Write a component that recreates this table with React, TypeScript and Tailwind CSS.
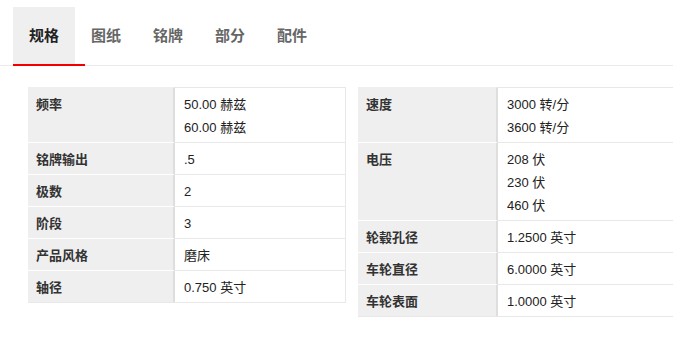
const tabs = ["规格", "图纸", "铭牌", "部分", "配件"]

type Spec = { label: string; values: string[] }

const leftSpecs: Spec[] = [
  { label: "频率", values: ["50.00 赫兹", "60.00 赫兹"] },
  { label: "铭牌输出", values: [".5"] },
  { label: "极数", values: ["2"] },
  { label: "阶段", values: ["3"] },
  { label: "产品风格", values: ["磨床"] },
  { label: "轴径", values: ["0.750 英寸"] },
]

const rightSpecs: Spec[] = [
  { label: "速度", values: ["3000 转/分", "3600 转/分"] },
  { label: "电压", values: ["208 伏", "230 伏", "460 伏"] },
  { label: "轮毂孔径", values: ["1.2500 英寸"] },
  { label: "车轮直径", values: ["6.0000 英寸"] },
  { label: "车轮表面", values: ["1.0000 英寸"] },
]

const SpecTable = ({ specs, labelWidth }: { specs: Spec[]; labelWidth: string }) => {
  return (
    <div className="w-[318px] shrink-0 border-r border-b border-[#e8e8e8]">
      {specs.map((spec, i) => (
        <div key={spec.label} className="flex">
          <div
            className={`${labelWidth} shrink-0 bg-[#efefef] border-r-2 border-[#dedede] px-2 pt-[5px] pb-[3px] font-bold text-[#333] border-t ${
              i === 0 ? "border-t-[#efefef]" : "border-t-white"
            }`}
          >
            <div className="h-[23px] leading-[23px] overflow-hidden">{spec.label}</div>
          </div>
          <div className="flex-1 border-t border-[#e8e8e8] pl-[9px] pt-[5px] pb-[3px] text-[#222]">
            {spec.values.map(v => (
              <div key={v} className="h-[23px] leading-[23px] overflow-hidden">{v}</div>
            ))}
          </div>
        </div>
      ))}
    </div>
  )
}

const App = () => {
  return (
    <div
      className="w-[673px] h-[339px] overflow-hidden bg-white text-[13px]"
      style={{ fontFamily: '"Liberation Sans", Arial, "Noto Sans CJK SC", sans-serif' }}
    >
      <div className="relative mt-[7px] flex pl-[13px] border-b border-[#ebebeb]">
        {tabs.map((tab, i) => (
          <div
            key={tab}
            className={`w-[62px] h-[58px] flex items-center justify-center text-[15px] font-bold ${
              i === 0 ? "bg-[#efefef] text-[#222]" : "text-[#666]"
            }`}
          >
            {tab}
          </div>
        ))}
        <div className="absolute left-[13px] -bottom-px h-[2px] w-[72px] bg-[#f20000]" />
      </div>

      <div className="flex items-start gap-[12px] pl-[28px] mt-[21px]">
        <SpecTable specs={leftSpecs} labelWidth="w-[147px]" />
        <SpecTable specs={rightSpecs} labelWidth="w-[140px]" />
      </div>
    </div>
  )
}

export default App
